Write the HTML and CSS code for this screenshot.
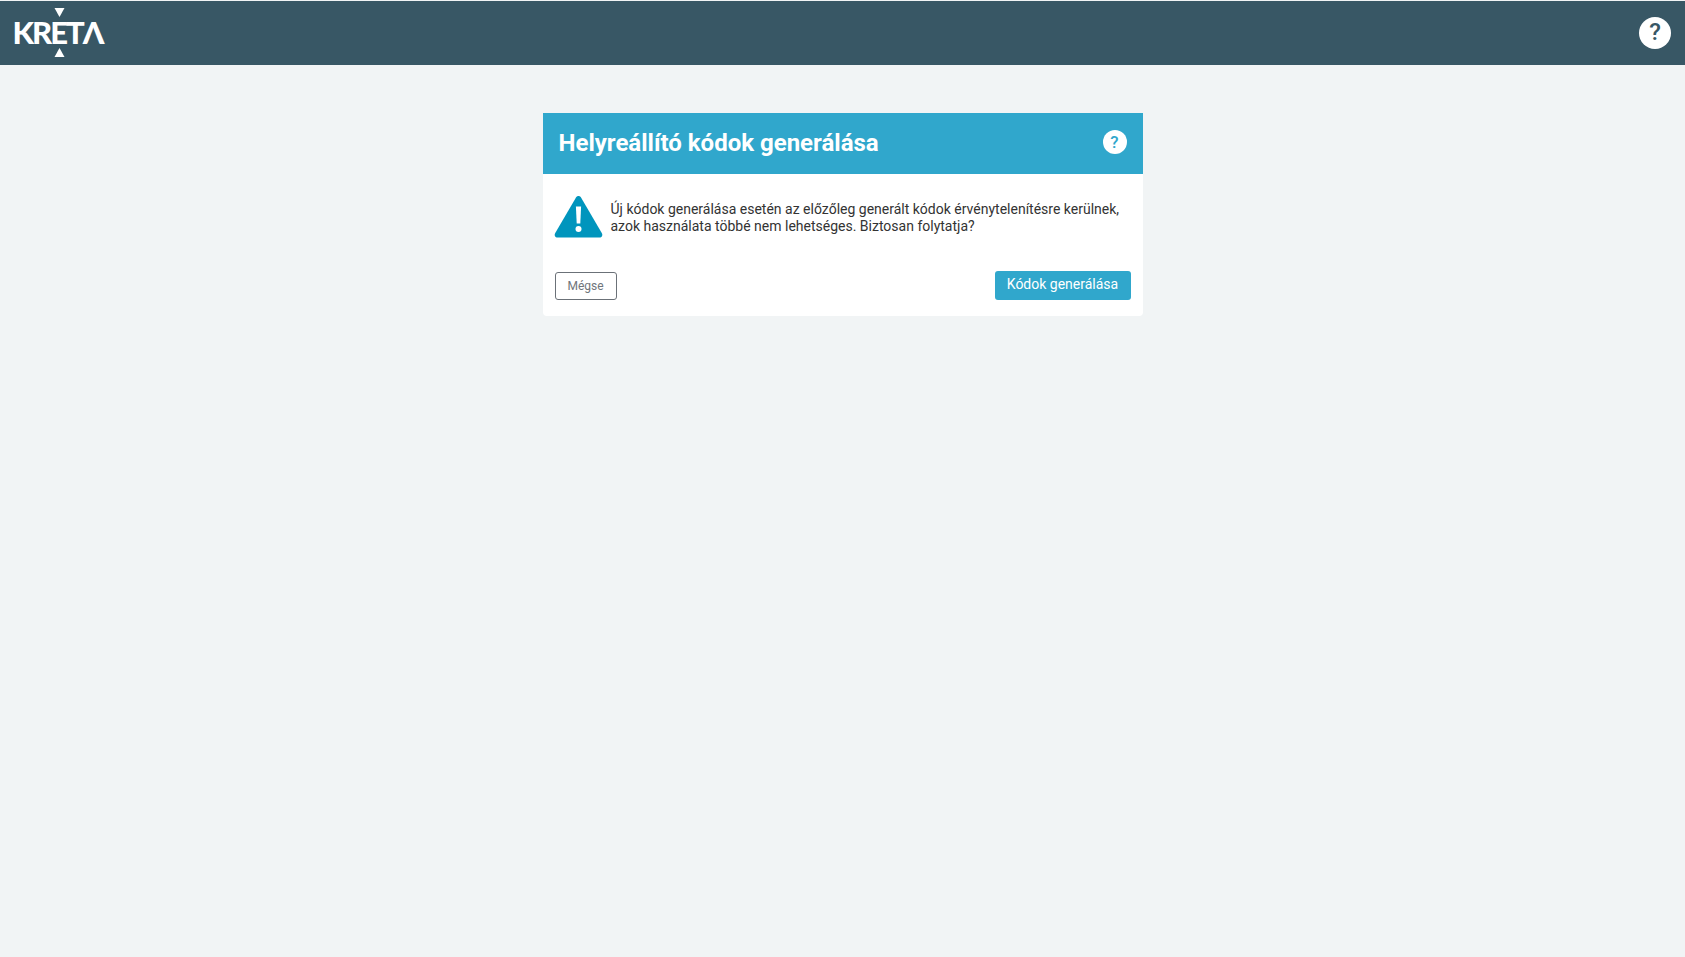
FILE: index.html
```html
<!DOCTYPE html>
<html lang="hu">
<head>
<meta charset="utf-8">
<title>Helyreállító kódok generálása</title>
<link rel="stylesheet" href="styles.css">
</head>
<body>
<header class="topbar">
  <div class="logo">
    <svg class="logo-tri logo-tri-top" viewBox="0 0 10 9"><polygon points="0,0 10,0 5,9"/></svg>
    <span class="logo-text">KRETΛ</span>
    <svg class="logo-tri logo-tri-bottom" viewBox="0 0 10 9"><polygon points="5,0 10,9 0,9"/></svg>
  </div>
  <button class="help-top" type="button">?</button>
</header>
<main class="content">
  <section class="card">
    <div class="card-head">
      <h1>Helyreállító kódok generálása</h1>
      <span class="help-card">?</span>
    </div>
    <div class="card-body">
      <div class="message">
        <svg class="warn" viewBox="0 0 48 42">
          <path fill="#0095bd" d="M24 0c1 0 1.900.5 2.500 1.500L47.400 37.200c1.100 2-.1 4.300-2.400 4.300H3c-2.300 0-3.500-2.300-2.400-4.300L21.500 1.500C22.100.5 23 0 24 0z"/>
          <path fill="#fff" d="M21.400 10.500h5.200l-.8 17h-3.600z"/>
          <circle fill="#fff" cx="24" cy="33" r="3"/>
        </svg>
        <p>Új kódok generálása esetén az előzőleg generált kódok érvénytelenítésre kerülnek, azok használata többé nem lehetséges. Biztosan folytatja?</p>
      </div>
      <div class="actions">
        <button class="btn btn-cancel" type="button">Mégse</button>
        <button class="btn btn-primary" type="button">Kódok generálása</button>
      </div>
    </div>
  </section>
</main>
</body>
</html>
```

FILE: styles.css
```css
* { box-sizing: border-box; }
html, body { margin: 0; height: 100%; }
body {
  background: #f1f4f5;
  font-family: Roboto, "Liberation Sans", sans-serif;
  overflow: hidden;
  padding-top: 1px;
}
.topbar {
  height: 64px;
  background: #385765;
  display: flex;
  align-items: center;
  justify-content: space-between;
  padding: 0 14px;
}
.logo {
  width: 91px;
  height: 49px;
  display: flex;
  flex-direction: column;
  align-items: center;
  justify-content: space-between;
  margin-top: -1px;
}
.logo-tri { width: 11px; height: 9px; fill: #fff; display: block; }
.logo-text {
  color: #fff;
  font-family: Lato, Roboto, sans-serif;
  font-weight: 900;
  font-size: 31px;
  line-height: 26px;
  letter-spacing: -2px;
  white-space: nowrap;
  margin-right: 4px;
  padding-bottom: 2px;
}
.help-top {
  width: 32px;
  height: 32px;
  border: 0;
  padding: 0 0 2px;
  border-radius: 50%;
  background: #fff;
  color: #385765;
  font: 500 24px/30px Roboto, sans-serif;
  text-align: center;
  margin-top: -1px;
}
.content {
  display: flex;
  justify-content: center;
  padding-top: 48px;
}
.card {
  width: 600px;
  height: 203px;
  background: #fff;
  border-radius: 0 0 4px 4px;
}
.card-head {
  height: 61px;
  background: #30a7cc;
  display: flex;
  align-items: center;
  justify-content: space-between;
  padding: 0 16px 2px 16px;
}
.card-head h1 {
  margin: 0;
  color: #fff;
  font-size: 24px;
  line-height: 32px;
  font-weight: 700;
}
.help-card {
  width: 24px;
  height: 24px;
  border-radius: 50%;
  background: #fff;
  color: #30a7cc;
  font: 500 17px/24px Roboto, sans-serif;
  text-align: center;
  margin-top: -2px;
}
.card-body { padding: 22px 12px 16px; }
.message { display: flex; gap: 8px; align-items: flex-start; height: 75px; }
.warn { width: 49px; height: 42px; flex: none; margin-left: -1px; }
.message p {
  margin: 5px 0 0;
  color: #333;
  font-size: 14px;
  line-height: 17px;
}
.actions {
  display: flex;
  justify-content: space-between;
  align-items: flex-end;
}
.btn {
  font-family: Roboto, sans-serif;
  border-radius: 3px;
  padding: 0;
}
.btn-cancel {
  width: 62px;
  height: 28px;
  background: #fff;
  border: 1px solid #6b7178;
  color: #6f757b;
  font-size: 12px;
}
.btn-primary {
  width: 136px;
  height: 29px;
  background: #30a7cc;
  border: 0;
  color: #fff;
  font-size: 14px;
  font-weight: 400;
  padding-bottom: 3px;
}
```
